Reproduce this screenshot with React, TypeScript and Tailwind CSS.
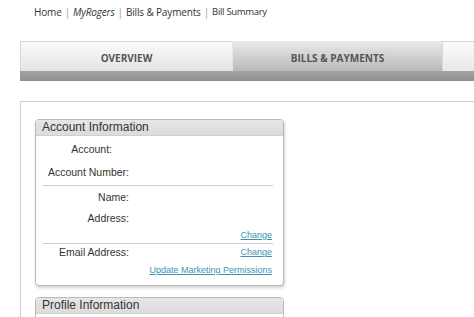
import React from 'react';

const crumbs = [
  { text: 'Home', italic: false },
  { text: 'MyRogers', italic: true },
  { text: 'Bills & Payments', italic: false },
];

type Row =
  | { kind: 'field'; label: string; h: string; pad?: string; link?: string }
  | { kind: 'link'; link: string; h: string }
  | { kind: 'rule' };

const rows: Row[] = [
  { kind: 'field', label: 'Account:', h: 'h-[22px]', pad: 'pr-[17px]' },
  { kind: 'field', label: 'Account Number:', h: 'h-[24px]' },
  { kind: 'rule' },
  { kind: 'field', label: 'Name:', h: 'h-[24px]' },
  { kind: 'field', label: 'Address:', h: 'h-[18px]' },
  { kind: 'link', link: 'Change', h: 'h-[15px]' },
  { kind: 'rule' },
  { kind: 'field', label: 'Email Address:', h: 'h-[18px]', link: 'Change' },
  { kind: 'link', link: 'Update Marketing Permissions', h: 'h-[17px]' },
];

function InfoLink({ children }: { children: React.ReactNode }) {
  return (
    <a href="#" className="text-[9px] text-[#3a93b4] underline underline-offset-[1px]">
      {children}
    </a>
  );
}

export default function App() {
  return (
    <div className="w-[474px] h-[317px] overflow-hidden bg-white font-['Liberation_Sans',Arial,sans-serif] text-[#333]">
      {/* Breadcrumb */}
      <div className="h-[41px] pl-[34px] pt-[4px] flex items-start text-[10px] tracking-[-0.15px] leading-[16px] text-[#333] font-['Open_Sans',sans-serif]">
        {crumbs.map((c, i) => (
          <React.Fragment key={i}>
            <span className={c.italic ? 'italic' : ''}>{c.text}</span>
            <span className="px-[3px] text-[#999]">|</span>
          </React.Fragment>
        ))}
        <span className="text-[9.5px] tracking-[-0.3px]">Bill Summary</span>
      </div>

      {/* Tabs */}
      <div className="ml-[20px] w-[470px]">
        <div className="flex h-[30px]">
          <div className="w-[212px] shrink-0 flex items-center justify-center pt-[3px] border-l border-t border-[#d6d6d6] bg-gradient-to-b from-[#fbfbfb] to-[#e4e4e4] text-[10px] font-bold text-[#555] font-['Open_Sans',sans-serif]">
            OVERVIEW
          </div>
          <div className="w-[210px] shrink-0 flex items-center justify-center pt-[3px] border-l border-t border-[#e6e6e6] bg-gradient-to-b from-[#e9e9e9] to-[#b9b9b9] text-[10px] font-bold text-[#555] font-['Open_Sans',sans-serif]">
            BILLS &amp; PAYMENTS
          </div>
          <div className="flex-1 border-l border-t border-[#d6d6d6] bg-gradient-to-b from-[#fbfbfb] to-[#e8e8e8]" />
        </div>
        <div className="h-[10px] bg-gradient-to-b from-[#a3a3a3] to-[#8f8f8f]" />
      </div>

      {/* Outer panel */}
      <div className="mt-[20px] ml-[20px] w-[470px] h-[300px] border-t border-l border-[#cfcfcf] pt-[17px] pl-[14px]">
        <div className="w-[249px] rounded-[4px] border border-[#b9b9b9] shadow-[1px_2px_3px_rgba(0,0,0,0.18)] bg-white overflow-hidden">
          <div className="h-[16px] bg-gradient-to-b from-[#e6e6e6] to-[#dcdcdc] border-b border-[#cfcfcf] pl-[6px] text-[12px] leading-[15px] text-[#333]">
            Account Information
          </div>
          <div className="pt-[3px] pb-[6px] text-[10.5px]">
            {rows.map((r, i) => {
              if (r.kind === 'rule') {
                return <div key={i} className="h-px ml-[7px] mr-[10px] bg-[#cfcfcf]" />;
              }
              if (r.kind === 'link') {
                return (
                  <div key={i} className={`${r.h} flex items-center justify-end pr-[11px]`}>
                    <InfoLink>{r.link}</InfoLink>
                  </div>
                );
              }
              return (
                <div key={i} className={`${r.h} flex items-center`}>
                  <div className={`w-[93px] shrink-0 text-right text-[#333] ${r.pad ?? ''}`}>{r.label}</div>
                  <div className="flex-1 flex justify-end pr-[11px]">
                    {r.link && <InfoLink>{r.link}</InfoLink>}
                  </div>
                </div>
              );
            })}
          </div>
        </div>

        <div className="mt-[11px] w-[249px] h-[40px] rounded-[4px] border border-[#b9b9b9] bg-white overflow-hidden">
          <div className="h-[16px] bg-gradient-to-b from-[#e6e6e6] to-[#dcdcdc] border-b border-[#cfcfcf] pl-[6px] text-[12px] leading-[15px] text-[#333]">
            Profile Information
          </div>
        </div>
      </div>
    </div>
  );
}
